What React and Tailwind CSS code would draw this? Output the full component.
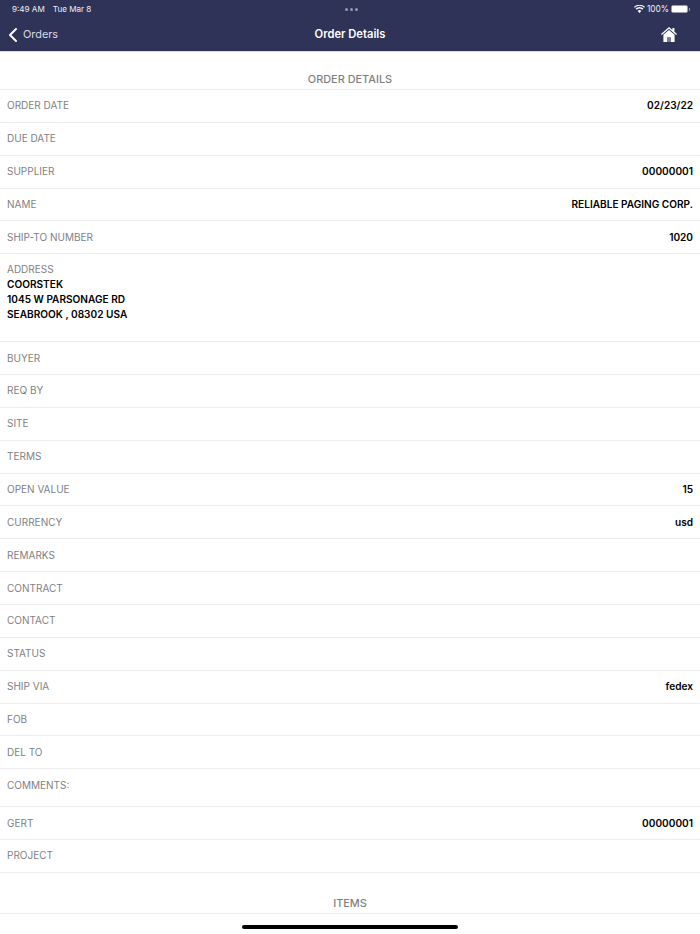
import React from 'react'
import { ChevronLeft } from 'lucide-react'

const rows = [
  { label: 'ORDER DATE', value: '02/23/22' },
  { label: 'DUE DATE' },
  { label: 'SUPPLIER', value: '00000001' },
  { label: 'NAME', value: 'RELIABLE PAGING CORP.' },
  { label: 'SHIP-TO NUMBER', value: '1020' },
  { label: 'ADDRESS', lines: ['COORSTEK', '1045 W PARSONAGE RD', 'SEABROOK , 08302 USA'] },
  { label: 'BUYER' },
  { label: 'REQ BY' },
  { label: 'SITE' },
  { label: 'TERMS' },
  { label: 'OPEN VALUE', value: '15' },
  { label: 'CURRENCY', value: 'usd' },
  { label: 'REMARKS' },
  { label: 'CONTRACT' },
  { label: 'CONTACT' },
  { label: 'STATUS' },
  { label: 'SHIP VIA', value: 'fedex' },
  { label: 'FOB' },
  { label: 'DEL TO' },
  { label: 'COMMENTS:', tall: true },
  { label: 'GERT', value: '00000001' },
  { label: 'PROJECT' },
]

function Row({ row }) {
  if (row.lines) {
    return (
      <div className="h-[88px] border-b border-[#ececec] pl-[7px] pt-[8px] leading-[15px]">
        <div className="text-[10px] text-[#7f7f83]">{row.label}</div>
        {row.lines.map((line) => (
          <div key={line} className="text-[10.1px] font-semibold text-black">{line}</div>
        ))}
      </div>
    )
  }
  return (
    <div className={`flex items-start justify-between border-b border-[#ececec] px-[7px] pt-[8.4px] leading-[15px] ${row.tall ? 'h-[38px]' : 'h-[32.85px]'}`}>
      <span className="text-[10px] text-[#7f7f83]">{row.label}</span>
      {row.value && <span className="text-[10.1px] font-semibold text-black">{row.value}</span>}
    </div>
  )
}

function StatusIcons() {
  return (
    <div className="flex items-center text-[8.3px] text-[#f0f0f4]">
      <svg width="11" height="8" viewBox="0 0 11 8" fill="white" className="mr-[2px]">
        <path d="M5.5 8 3.7 5.9a2.6 2.6 0 0 1 3.6 0L5.5 8ZM2.7 4.8 1.6 3.6a5.6 5.6 0 0 1 7.8 0L8.3 4.8a4.1 4.1 0 0 0-5.6 0ZM.8 2.7 0 1.9a8 8 0 0 1 11 0l-.8.8a6.8 6.8 0 0 0-9.4 0Z" />
      </svg>
      <span>100%</span>
      <div className="ml-[2px] flex items-center">
        <div className="h-[8px] w-[17px] rounded-[2px] border border-[#9a9cb0] bg-white" />
        <div className="ml-[1px] h-[3px] w-[1px] bg-white/50" />
      </div>
    </div>
  )
}

export default function App() {
  return (
    <div className="relative h-[934px] w-[700px] overflow-hidden bg-white font-['Inter',sans-serif]">
      <header className="h-[52px] border-b border-[#d5d7e3] bg-[#2e3357]">
        <div className="flex h-[18px] items-center justify-between pl-[12px] pr-[10px] text-[8.1px] text-[#f0f0f4]">
          <div className="flex w-[120px] gap-[8px]">
            <span>9:49 AM</span>
            <span>Tue Mar 8</span>
          </div>
          <div className="flex gap-[2px]">
            <div className="h-[3px] w-[3px] rounded-full bg-white/50" />
            <div className="h-[3px] w-[3px] rounded-full bg-white/50" />
            <div className="h-[3px] w-[3px] rounded-full bg-white/50" />
          </div>
          <div className="flex w-[120px] justify-end">
            <StatusIcons />
          </div>
        </div>
        <div className="flex h-[33px] items-center justify-between">
          <div className="flex w-[120px] items-center text-[10.9px] text-[#d9dae3]">
            <ChevronLeft size={24} strokeWidth={2} className="ml-[1px] text-white" />
            <span className="-ml-[2px]">Orders</span>
          </div>
          <div className="text-[11.2px] font-semibold text-white">Order Details</div>
          <div className="flex w-[120px] justify-end pr-[23px]">
            <svg width="16" height="15" viewBox="0 0 16 15">
              <path fill="white" d="M8 0 0 7l.8.9L8 1.7l7.2 6.2.8-.9-2.6-2.3V1h-2v2L8 0Z" />
              <path fill="white" d="M8 3 2.4 7.8V15h3.8v-4.6h3.6V15h3.8V7.8L8 3Z" />
              <rect x="6.2" y="10.4" width="3.6" height="4.6" fill="#7d8098" />
            </svg>
          </div>
        </div>
      </header>

      <div className="flex h-[38px] items-end justify-center border-b border-[#ececec] pb-[2px] text-[10.9px] font-medium leading-[15px] text-[#7f7f83]">
        ORDER DETAILS
      </div>

      {rows.map((row) => (
        <Row key={row.label} row={row} />
      ))}

      <div className="flex h-[41px] items-end justify-center border-b border-[#ececec] pb-[2px] text-[10.9px] font-medium leading-[15px] text-[#7f7f83]">
        ITEMS
      </div>

      <div className="absolute bottom-[5px] left-[242px] h-[4px] w-[216px] rounded-full bg-black" />
    </div>
  )
}
